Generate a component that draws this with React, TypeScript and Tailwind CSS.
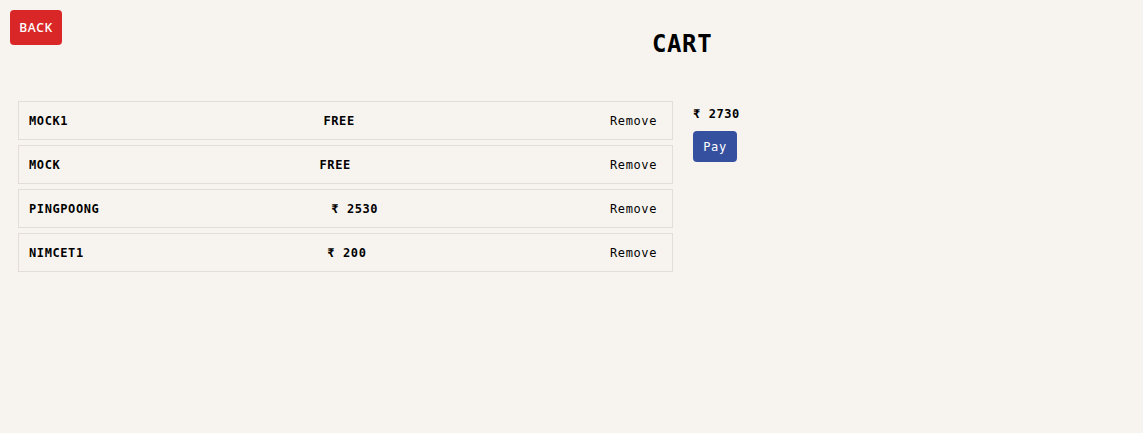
const items = [
  { name: "MOCK1", price: "FREE" },
  { name: "MOCK", price: "FREE" },
  { name: "PINGPOONG", price: "₹ 2530" },
  { name: "NIMCET1", price: "₹ 200" },
];

const App = () => {
  return (
    <div className="min-h-screen bg-[#f7f4f0] text-black font-['DejaVu_Sans_Mono',monospace]">
      {/* Header */}
      <div className="flex items-start pl-[10px] pt-[10px]">
        <button className="h-[35px] w-[52px] rounded-[4px] bg-[#d92626] text-white text-[12px] font-semibold tracking-[0.6px] font-['Open_Sans',sans-serif]">
          BACK
        </button>
        <h1 className="ml-[590px] mt-[18px] text-[24px] leading-[32px] font-bold tracking-[0.6px]">CART</h1>
      </div>

      <div className="flex items-start gap-5 px-[18px] mt-[41px]">
        {/* Cart items */}
        <div className="w-[655px] flex flex-col gap-[5px]">
          {items.map((item) => (
            <div
              key={item.name}
              className="h-[39px] flex items-center justify-between border border-[#e2ddd9] pl-[10px] pr-[15px] text-[12px] tracking-[0.6px]"
            >
              <span className="font-bold">{item.name}</span>
              <span className="font-bold">{item.price}</span>
              <button className="font-normal tracking-[0.6px]">Remove</button>
            </div>
          ))}
        </div>

        {/* Total */}
        <div className="flex flex-col items-start pt-[3px]">
          <p className="text-[12px] leading-[20px] font-bold tracking-[0.6px]">₹ 2730</p>
          <button className="mt-[7px] h-[31px] w-[44px] rounded-[4px] bg-[#3650a0] text-white text-[12px] tracking-[0.6px]">
            Pay
          </button>
        </div>
      </div>
    </div>
  );
};

export default App;
